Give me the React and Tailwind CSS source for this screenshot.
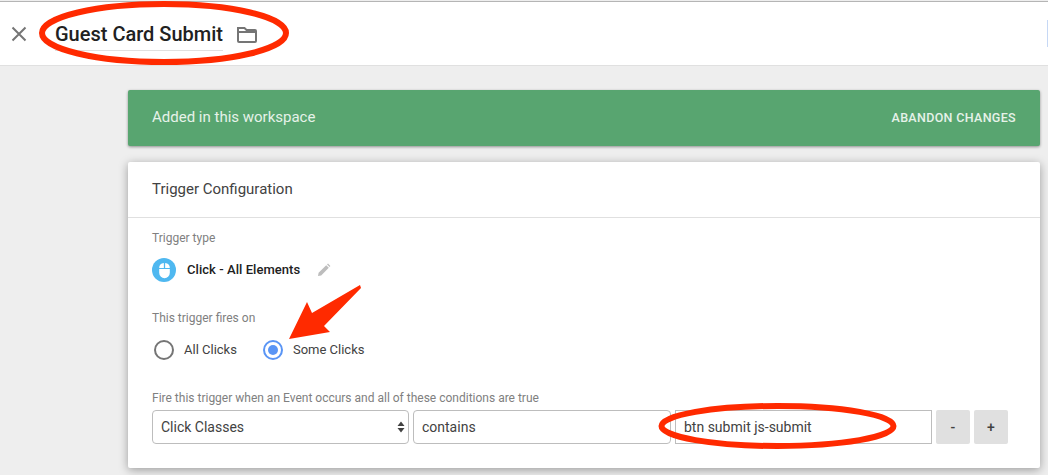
const font = { fontFamily: 'Roboto, "Liberation Sans", sans-serif' };

function Radio({ checked, label }) {
  return (
    <label className="flex items-center gap-[10px]">
      <span className={`flex h-[20px] w-[20px] items-center justify-center rounded-full border-2 ${checked ? "border-[#5a95f5]" : "border-[#757575]"}`}>
        {checked && <span className="h-[10px] w-[10px] rounded-full bg-[#5a95f5]" />}
      </span>
      <span className="text-[13px] text-[#424242]">{label}</span>
    </label>
  );
}

export default function App() {
  return (
    <div style={font} className="relative flex h-[475px] w-[1048px] flex-col overflow-hidden bg-[#eeeeee]">
      <header className="mt-[1px] flex h-[65px] shrink-0 items-center border-t border-b border-t-[#b5b5b5] border-b-[#e0e0e0] bg-white pl-[10px]">
        <svg width="18" height="18" viewBox="0 0 18 18" className="shrink-0">
          <path d="M2.5 2.5 L15.5 15.5 M15.5 2.5 L2.5 15.5" stroke="#757575" strokeWidth="2" fill="none" />
        </svg>
        <div className="ml-[27px] border-b border-[#e0e0e0] pb-[4px] pt-[6px] text-[20px] font-medium leading-[24px] text-[#212121]">Guest Card Submit</div>
        <svg width="22" height="18" viewBox="0 0 22 18" className="ml-[13px] mt-[2px] shrink-0">
          <path d="M2 2 H8.5 L10.5 4 H19 Q20 4 20 5 V15 Q20 16 19 16 H3 Q2 16 2 15 Z M2 6 H20" stroke="#757575" strokeWidth="2" fill="none" />
        </svg>
        <div className="ml-auto h-[27px] w-[1px] bg-[#c6d8f5]" />
      </header>

      <main className="flex flex-col gap-[16px] pl-[128px] pr-[8px] pt-[24px]">
        <section className="flex h-[56px] items-center justify-between rounded-[2px] bg-[#58a570] pl-[24px] pr-[24px] shadow-[0_1px_3px_rgba(0,0,0,0.4)]">
          <span className="pb-[1px] text-[15px] text-[#e6f2e9]">Added in this workspace</span>
          <button className="text-[12.5px] font-medium tracking-[0.33px] text-[#e6f2e9]">ABANDON CHANGES</button>
        </section>

        <section className="h-[306px] rounded-[2px] bg-white shadow-[0_2px_10px_rgba(0,0,0,0.35)]">
          <div className="flex h-[56px] items-center border-b border-[#e0e0e0] px-[24px] text-[15px] text-[#424242]">
            Trigger Configuration
          </div>
          <div className="flex flex-col px-[24px] pt-[14px]">
            <div className="text-[12px] leading-[13px] text-[#808080]">Trigger type</div>
            <div className="mt-[13px] flex items-center">
              <span className="flex h-[24px] w-[24px] items-center justify-center rounded-full bg-[#4fb8f0]">
                <svg width="13" height="17" viewBox="0 0 12 16">
                  <path d="M1 6.6 V10.2 a5 5 0 0 0 10 0 V6.6 Z" fill="white" />
                  <path d="M1 5.6 a5 4.6 0 0 1 4.4 -4.6 V5.6 Z M11 5.6 a5 4.6 0 0 0 -4.4 -4.6 V5.6 Z" fill="white" />
                </svg>
              </span>
              <span className="ml-[11px] text-[13px] font-medium tracking-[0.05px] text-[#212121]">Click - All Elements</span>
              <svg width="14" height="14" viewBox="0 0 14 14" className="ml-[17px]">
                <path d="M1 13 L1.6 9.8 L9.2 2.2 L11.8 4.8 L4.2 12.4 Z M10 1.4 L11 .6 L13.4 3 L12.6 4 Z" fill="#bdbdbd" />
              </svg>
            </div>
            <div className="mt-[30px] text-[12px] leading-[13px] text-[#808080]">This trigger fires on</div>
            <div className="ml-[2px] mt-[15px] flex gap-[26px]">
              <Radio label="All Clicks" />
              <Radio checked label="Some Clicks" />
            </div>
            <div className="mt-[32px] text-[12px] leading-[13px] text-[#808080]">Fire this trigger when an Event occurs and all of these conditions are true</div>
            <div className="mt-[5px] flex h-[34px] items-stretch gap-[4px] text-[14px] text-[#424242]">
              <div className="flex w-[257px] items-center justify-between rounded-[4px] border border-[#bdbdbd] pl-[8px] pr-[2px]">
                <span>Click Classes</span>
                <svg width="10" height="14" viewBox="0 0 10 14"><path d="M5 1.5 L8.5 6 H1.5 Z M5 12.5 L8.5 8 H1.5 Z" fill="#424242" /></svg>
              </div>
              <div className="flex w-[258px] items-center rounded-[4px] border border-[#bdbdbd] pl-[8px]">contains</div>
              <div className="flex w-[257px] items-center border border-[#bdbdbd] pl-[8px]">btn submit js-submit</div>
              <button className="flex w-[34px] items-center justify-center rounded-[2px] bg-[#e0e0e0] font-medium">-</button>
              <button className="flex w-[34px] items-center justify-center rounded-[2px] bg-[#e0e0e0] font-medium">+</button>
            </div>
          </div>
        </section>
      </main>

      <svg className="pointer-events-none absolute left-0 top-0" width="1048" height="475" viewBox="0 0 1048 475">
        <ellipse cx="164" cy="33" rx="122" ry="29" fill="none" stroke="#ff2a00" strokeWidth="6" />
        <ellipse cx="777.5" cy="426" rx="116" ry="20" fill="none" stroke="#ff2a00" strokeWidth="6" />
        <polygon points="360,285 312,313 307,302 289,339 330,332 324,326 361,288" fill="#ff2a00" />
      </svg>
    </div>
  );
}
